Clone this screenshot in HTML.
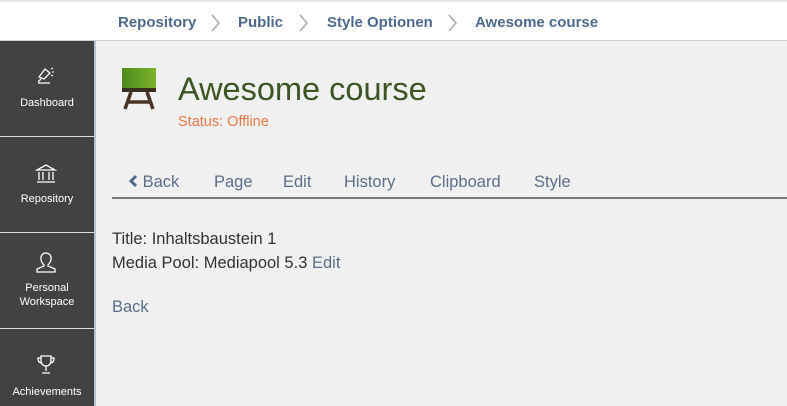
<!DOCTYPE html><html><head><style>
body{margin:0;width:787px;height:406px;overflow:hidden;background:#f0f0f0;font-family:"Liberation Sans",sans-serif;position:relative}
.top{position:absolute;left:0;top:0;width:787px;height:41px;background:#fff;border-top:2px solid #e4e4e4;box-sizing:border-box;border-bottom:1px solid #c8d0dc}
.bc{position:absolute;top:12px;font-size:15px;color:#4d6a8c;font-weight:bold}
.sep{position:absolute;top:12px}
.side{position:absolute;left:0;top:41px;width:94px;height:365px;background:#424242;border-right:2px solid #b6c4d6}
.it{position:absolute;left:0;width:94px;color:#fff;font-size:11px;text-align:center;line-height:14px}
.ln{position:absolute;left:0;width:94px;height:1px;background:#ddd}
.a{position:absolute;font-size:16.5px;color:#5c6e88}
.t{position:absolute;font-size:16.5px;color:#333}
</style></head><body>
<div class="top">
<span class="bc" style="left:118px">Repository</span><svg class="sep" style="left:210px" width="10" height="18" viewBox="0 0 10 18"><path d="M2 1l7 8-7 8" fill="none" stroke="#aaa" stroke-width="1.5"/></svg>
<span class="bc" style="left:238px">Public</span><svg class="sep" style="left:298px" width="10" height="18" viewBox="0 0 10 18"><path d="M2 1l7 8-7 8" fill="none" stroke="#aaa" stroke-width="1.5"/></svg>
<span class="bc" style="left:327px">Style Optionen</span><svg class="sep" style="left:447px" width="10" height="18" viewBox="0 0 10 18"><path d="M2 1l7 8-7 8" fill="none" stroke="#aaa" stroke-width="1.5"/></svg>
<span class="bc" style="left:475px">Awesome course</span>
</div>
<div class="side">
<svg style="position:absolute;left:35px;top:24px" width="22" height="22" viewBox="0 0 22 22" fill="none" stroke="#fff" stroke-width="1.3"><path d="M4 12 L10 4 L15 8 L9 14Z M6 14 L3 17 M3 18h12"/><path d="M16 4l2-1M17 7h2M16 10l2 1" stroke-width="1"/></svg>
<div class="it" style="top:55px">Dashboard</div>
<div class="ln" style="top:95px"></div>
<svg style="position:absolute;left:35px;top:122px" width="22" height="22" viewBox="0 0 22 22" fill="none" stroke="#fff" stroke-width="1.3"><path d="M2 7 L11 2 L20 7Z M4 9v8M8 9v8M14 9v8M18 9v8M2 19h18"/></svg>
<div class="it" style="top:151px">Repository</div>
<div class="ln" style="top:191px"></div>
<svg style="position:absolute;left:35px;top:210px" width="22" height="24" viewBox="0 0 22 24" fill="none" stroke="#fff" stroke-width="1.3"><path d="M11 2a5 5 0 0 1 5 6c0 3-2 5-3 6v1l7 3v3H2v-3l7-3v-1c-1-1-3-3-3-6a5 5 0 0 1 5-6z"/></svg>
<div class="it" style="top:240px">Personal<br>Workspace</div>
<div class="ln" style="top:287px"></div>
<svg style="position:absolute;left:36px;top:313px" width="20" height="22" viewBox="0 0 20 22" fill="none" stroke="#fff" stroke-width="1.3"><path d="M5 2h10v5a5 5 0 0 1-10 0z M5 4H2c0 3 1 5 4 5M15 4h3c0 3-1 5-4 5M10 12v5M6 19h8"/></svg>
<div class="it" style="top:344px">Achievements</div>
</div>
<svg style="position:absolute;left:121px;top:67px" width="36" height="44" viewBox="0 0 36 44"><defs><linearGradient id="g" x1="0" x2="1"><stop offset="0" stop-color="#4d8a1e"/><stop offset="1" stop-color="#7cb32a"/></linearGradient></defs><rect x="1" y="1" width="34" height="22" fill="url(#g)"/><rect x="1" y="21" width="34" height="4" fill="#3a2d22"/><path d="M10 25L4 42M26 25L32 42M7 35h22" stroke="#4a3426" stroke-width="3.5"/></svg>
<div style="position:absolute;left:178px;top:71px;font-size:32.5px;color:#3d5424">Awesome course</div>
<div style="position:absolute;left:178px;top:114px;font-size:14.5px;color:#e87a48">Status: Offline</div>
<div class="a" style="left:128px;top:173px"><svg width="10" height="14" viewBox="0 0 10 14" style="vertical-align:-1px"><path d="M8 2L3 7l5 5" fill="none" stroke="#4d6a8c" stroke-width="3"/></svg> Back</div>
<div class="a" style="left:214px;top:173px">Page</div>
<div class="a" style="left:283px;top:173px">Edit</div>
<div class="a" style="left:344px;top:173px">History</div>
<div class="a" style="left:430px;top:173px">Clipboard</div>
<div class="a" style="left:534px;top:173px">Style</div>
<div style="position:absolute;left:112px;top:197px;width:675px;height:2px;background:#7a7a7a"></div>
<div class="t" style="left:112px;top:230px">Title: Inhaltsbaustein 1</div>
<div class="t" style="left:112px;top:254px">Media Pool: Mediapool 5.3 <span style="color:#5c6e88">Edit</span></div>
<div class="a" style="left:112px;top:298px">Back</div>
</body></html>
